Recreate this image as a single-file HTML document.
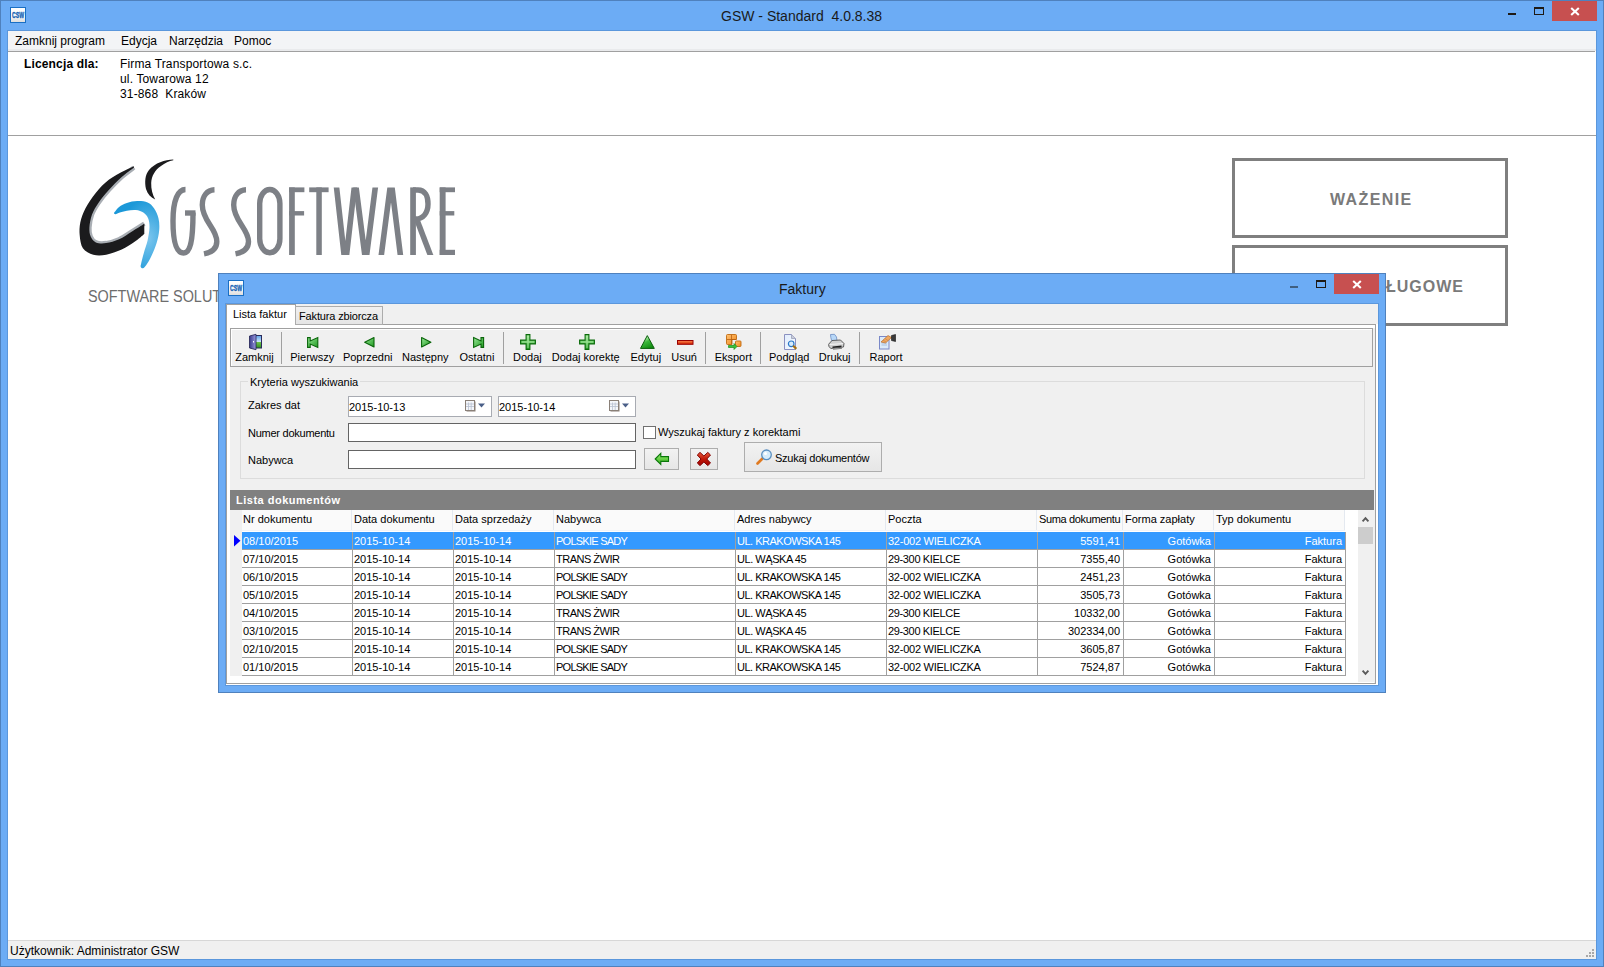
<!DOCTYPE html>
<html><head><meta charset="utf-8"><style>
*{box-sizing:border-box;margin:0;padding:0}
html,body{width:1604px;height:967px;overflow:hidden;background:#fff}
body{font-family:"Liberation Sans",sans-serif;font-size:11px;color:#000;position:relative}
.a{position:absolute}
.t{position:absolute;white-space:pre;line-height:1}
.c{position:absolute;white-space:pre;line-height:1;text-align:center}
.r{position:absolute;white-space:pre;line-height:1;text-align:right}
svg{position:absolute;overflow:visible}
</style></head><body>
<div class="a" style="left:0px;top:0px;width:1604px;height:967px;background:#6cacf5;border:1px solid #4f81bd"></div>
<svg style="left:10px;top:7px" width="16" height="16" viewBox="0 0 16 16"><defs><linearGradient id="ig10" x1="0" y1="0" x2="0" y2="1"><stop offset="0" stop-color="#fff"/><stop offset="0.55" stop-color="#f6f6f6"/><stop offset="1" stop-color="#dcdcdc"/></linearGradient></defs><rect x="0.5" y="0.5" width="15" height="15" fill="url(#ig10)" stroke="#1a6fc4"/><text x="2" y="11" font-family="Liberation Sans" font-size="8.2" font-weight="700" fill="#1461b4" stroke="#1461b4" stroke-width="0.35" textLength="12" lengthAdjust="spacingAndGlyphs" transform="translate(0,-1.6) scale(1,1.15)">CSW</text></svg>
<div class="t" style="left:721px;top:9px;font-size:14px;color:#1a1a1a">GSW - Standard  4.0.8.38</div>
<div class="a" style="left:1508px;top:13px;width:8px;height:2px;background:#1e1a16"></div>
<div class="a" style="left:1534px;top:7px;width:10px;height:8px;border:1px solid #1e1a16;border-top-width:2px"></div>
<div class="a" style="left:1552px;top:1px;width:45px;height:20px;background:#c75050"></div>
<svg style="left:1552px;top:1px" width="45" height="20"><path d="M19.2 7 L26.8 14 M26.8 7 L19.2 14" stroke="#fff" stroke-width="2.1"/></svg>
<div class="a" style="left:7px;top:30px;width:1590px;height:930px;background:#5b97dc"></div>
<div class="a" style="left:8px;top:31px;width:1588px;height:928px;background:#fff"></div>
<div class="a" style="left:8px;top:31px;width:1588px;height:18px;background:#f3f4f6"></div>
<div class="a" style="left:8px;top:49px;width:1588px;height:2px;background:#e9eaec"></div>
<div class="a" style="left:8px;top:51px;width:1587px;height:1px;background:#a0a0a0"></div>
<div class="t" style="left:15px;top:35px;font-size:12px">Zamknij program</div>
<div class="t" style="left:121px;top:35px;font-size:12px">Edycja</div>
<div class="t" style="left:169px;top:35px;font-size:12px">Narzędzia</div>
<div class="t" style="left:234px;top:35px;font-size:12px">Pomoc</div>
<div class="t" style="left:24px;top:58px;font-size:12px;font-weight:700;letter-spacing:0.15px">Licencja dla:</div>
<div class="t" style="left:120px;top:57px;font-size:12px;line-height:15px;letter-spacing:0.15px">Firma Transportowa s.c.
ul. Towarowa 12
31-868  Kraków</div>
<div class="a" style="left:8px;top:135px;width:1588px;height:1px;background:#a0a0a0"></div>
<div class="a" style="left:8px;top:940px;width:1588px;height:1px;background:#d7d7d7"></div>
<div class="a" style="left:8px;top:941px;width:1588px;height:18px;background:#f0f0f0"></div>
<div class="t" style="left:10px;top:945px;font-size:12px">Użytkownik: Administrator GSW</div>
<div class="a" style="left:1592px;top:949px;width:2px;height:2px;background:#a8a8a8"></div>
<div class="a" style="left:1589px;top:952px;width:2px;height:2px;background:#a8a8a8"></div>
<div class="a" style="left:1592px;top:952px;width:2px;height:2px;background:#a8a8a8"></div>
<div class="a" style="left:1586px;top:955px;width:2px;height:2px;background:#a8a8a8"></div>
<div class="a" style="left:1589px;top:955px;width:2px;height:2px;background:#a8a8a8"></div>
<div class="a" style="left:1592px;top:955px;width:2px;height:2px;background:#a8a8a8"></div>
<div class="a" style="left:1232px;top:158px;width:276px;height:80px;border:3px solid #7f7f7f"></div>
<div class="t" style="left:1330px;top:192px;font-size:16px;font-weight:700;color:#7a7a7a;letter-spacing:1.4px">WAŻENIE</div>
<div class="a" style="left:1232px;top:245px;width:276px;height:81px;border:3px solid #7f7f7f"></div>
<div class="r" style="right:140px;top:279px;font-size:16px;font-weight:700;color:#7a7a7a;letter-spacing:1.0px">USŁUGOWE</div>
<div class="t" style="left:88px;top:289px;font-size:16px;color:#6d6d6d;transform:scaleX(0.9);transform-origin:0 0">SOFTWARE SOLUTIONS</div>
<svg style="left:0;top:0" width="470" height="280" viewBox="0 0 470 280">
<defs>
<radialGradient id="bl" cx="0.75" cy="0.55" r="0.6"><stop offset="0" stop-color="#7cc6ee"/><stop offset="1" stop-color="#1b98d8"/></radialGradient>
<clipPath id="lc"><rect x="280" y="187.4" width="180" height="67.6"/></clipPath>
</defs>
<!-- gray shadow along big C inner edge -->
<path d="M134.0,167.5 C131.9,169.1 125.9,173.4 121.7,177.1 C117.5,180.9 112.7,185.8 108.8,190.1 C104.9,194.4 101.2,198.9 98.4,203.0 C95.6,207.1 93.5,210.5 92.0,214.6 C90.5,218.7 89.6,223.9 89.4,227.6 C89.2,231.2 89.6,234.1 90.7,236.6 C91.8,239.1 93.3,241.3 95.9,242.4 C98.4,243.5 102.3,243.6 106.2,243.1 C110.1,242.5 114.8,241.1 119.1,239.2 C123.4,237.3 127.8,234.0 132.0,231.4 C136.2,228.9 142.3,225.0 144.3,223.7" fill="none" stroke="#a9aeb4" stroke-width="4.5"/>
<!-- big black C -->
<path d="M134.0,166.2 C132.4,166.9 128.5,168.4 124.3,170.7 C120.1,172.9 113.5,176.1 108.8,179.7 C104.0,183.4 99.7,187.9 95.9,192.7 C92.0,197.4 88.1,203.2 85.5,208.2 C82.9,213.1 81.3,217.9 80.3,222.4 C79.4,226.9 79.3,231.0 79.7,235.3 C80.1,239.6 80.7,245.0 82.9,248.2 C85.2,251.5 89.4,253.6 93.3,254.7 C97.1,255.8 101.5,255.6 106.2,254.7 C110.9,253.8 117.0,251.7 121.7,249.5 C126.4,247.4 130.9,244.4 134.6,241.8 C138.4,239.2 142.7,235.3 144.3,234.0 L144.3,223.7 C142.3,225.0 136.2,228.9 132.0,231.4 C127.8,234.0 123.4,237.3 119.1,239.2 C114.8,241.1 110.1,242.5 106.2,243.1 C102.3,243.6 98.4,243.5 95.9,242.4 C93.3,241.3 91.8,239.1 90.7,236.6 C89.6,234.1 89.2,231.2 89.4,227.6 C89.6,223.9 90.5,218.7 92.0,214.6 C93.5,210.5 95.6,207.1 98.4,203.0 C101.2,198.9 104.9,194.4 108.8,190.1 C112.7,185.8 117.5,180.9 121.7,177.1 C125.9,173.4 131.9,169.1 134.0,167.5 Z" fill="#1b1b1d"/>
<!-- small top swoosh -->
<path d="M173.3,159.5 C165,159.5 155,163 149,170 C145,175 144.5,182 146,189 C147.5,194 151,197.5 155.2,199.5 C152.5,195 151,189 151.2,183 C151.5,176 155,170 161,166 C165,163 169,161 173.3,160.3 Z" fill="#1b1b1d"/>
<!-- blue swoosh -->
<path d="M114.6,212.0 C115.4,211.2 117.1,208.4 119.1,206.9 C121.2,205.4 123.9,204.0 126.9,203.0 C129.9,202.0 133.8,201.2 137.2,201.1 C140.7,201.0 144.8,201.2 147.6,202.4 C150.4,203.5 152.2,205.5 154.0,208.2 C155.9,210.9 157.7,214.8 158.5,218.5 C159.4,222.2 159.5,226.1 159.2,230.1 C158.9,234.2 157.9,238.8 156.6,243.1 C155.3,247.4 153.2,252.3 151.4,256.0 C149.7,259.7 147.7,263.0 146.3,265.0 C144.9,267.1 143.9,268.0 143.0,268.3 C142.1,268.6 141.2,267.7 140.8,267.0 C140.5,266.2 140.6,266.0 141.1,263.8 C141.6,261.5 142.6,257.3 143.7,253.4 C144.8,249.5 146.6,244.8 147.6,240.5 C148.5,236.2 149.4,231.2 149.5,227.6 C149.6,223.9 149.2,221.0 148.2,218.5 C147.2,216.0 145.7,214.1 143.7,212.7 C141.6,211.3 138.7,210.4 135.9,210.1 C133.1,209.8 129.7,210.3 126.9,210.8 C124.1,211.2 121.0,212.1 119.1,212.7 C117.2,213.3 116.4,214.1 115.5,214.2 C114.6,214.4 114.1,213.7 114.0,213.3 C113.8,213.0 114.5,212.3 114.6,212.0 Z" fill="url(#bl)"/>
<g fill="none" stroke="#7d8086" stroke-width="5.4">
<!-- G -->
<path d="M185.5 189.5 C178 189.5 173 200 173 221 C173 244 177 253 183.5 253 C190 253 193 242 193 212.5" />
<path d="M185 213 L195.5 213" />
<!-- S -->
<path d="M214.5 189.8 C207 190 202.3 196 202.3 205 C202.3 213 206 219 210 225 C214 231 216.8 236 216.8 241.5 C216.8 249 211 252.5 204 253.8" />
<path d="M246 189.8 C238.5 190 233.7 196 233.7 205 C233.7 213 237.5 219 241.5 225 C245.5 231 248.5 236 248.5 241.5 C248.5 249 242.5 252.5 235.5 253.8" />
<!-- O -->
<rect x="259.7" y="189.5" width="20.2" height="63.2" rx="10.1" ry="14"/>
</g>
<g fill="#7d8086">
<!-- F -->
<rect x="289.1" y="187.4" width="5.7" height="67.6"/><rect x="289.1" y="187.4" width="15.3" height="4.8"/><rect x="289.1" y="211.1" width="15" height="4.4"/>
<!-- T -->
<rect x="309.2" y="187.4" width="19.4" height="4.8"/><rect x="316.3" y="187.4" width="5.5" height="67.6"/>
<!-- R stem -->
<rect x="410.2" y="187.4" width="5.7" height="67.6"/>
<!-- E -->
<rect x="439.7" y="187.4" width="5.9" height="67.6"/><rect x="439.7" y="187.4" width="15.3" height="4.8"/><rect x="439.7" y="211.1" width="14.6" height="4.4"/><rect x="439.7" y="249.8" width="15.3" height="5.2"/>
</g>
<g fill="none" stroke="#7d8086" stroke-width="5.6" clip-path="url(#lc)">
<path d="M334.6 170 L346 272 M356.3 170 L344.6 272"/>
<path d="M353.8 170 L367 272 M377.5 170 L364.5 272"/>
<path d="M392.4 170 L379.1 272 M389.8 170 L402.5 272"/>
<path d="M417 220 L431.5 258"/>
</g>
<path d="M413 190 L418 190 C425 190 428 196 428 204 C428 213 423 219 416 219 L413 219" fill="none" stroke="#7d8086" stroke-width="5.4"/>
</svg>

<div class="a" style="left:218px;top:273px;width:1168px;height:420px;background:#6cacf5;border:1px solid #4f81bd"></div>
<svg style="left:228px;top:280px" width="16" height="16" viewBox="0 0 16 16"><defs><linearGradient id="ig228" x1="0" y1="0" x2="0" y2="1"><stop offset="0" stop-color="#fff"/><stop offset="0.55" stop-color="#f6f6f6"/><stop offset="1" stop-color="#dcdcdc"/></linearGradient></defs><rect x="0.5" y="0.5" width="15" height="15" fill="url(#ig228)" stroke="#1a6fc4"/><text x="2" y="11" font-family="Liberation Sans" font-size="8.2" font-weight="700" fill="#1461b4" stroke="#1461b4" stroke-width="0.35" textLength="12" lengthAdjust="spacingAndGlyphs" transform="translate(0,-1.6) scale(1,1.15)">CSW</text></svg>
<div class="t" style="left:779px;top:282px;font-size:14px;color:#1a1a1a">Faktury</div>
<div class="a" style="left:1290px;top:286px;width:8px;height:2px;background:#3f5f80"></div>
<div class="a" style="left:1316px;top:280px;width:10px;height:8px;border:1px solid #1e1a16;border-top-width:2px"></div>
<div class="a" style="left:1334px;top:274px;width:45px;height:20px;background:#c75050"></div>
<svg style="left:1334px;top:274px" width="45" height="20"><path d="M19.2 7 L26.8 14 M26.8 7 L19.2 14" stroke="#fff" stroke-width="2.1"/></svg>
<div class="a" style="left:225px;top:303px;width:1154px;height:383px;background:#5b97dc"></div>
<div class="a" style="left:226px;top:304px;width:1152px;height:381px;background:#f0f0f0"></div>
<div class="a" style="left:226px;top:324px;width:1152px;height:361px;background:#fff"></div>
<div class="a" style="left:226px;top:324px;width:1150px;height:360px;border:1px solid #a0a0a0;background:#fff"></div>
<div class="a" style="left:226px;top:304px;width:70px;height:21px;background:#fff;border:1px solid #a0a0a0;border-bottom:none"></div>
<div class="t" style="left:233px;top:309px">Lista faktur</div>
<div class="a" style="left:295px;top:306px;width:88px;height:19px;background:linear-gradient(#f0f0f0,#e5e5e5);border:1px solid #acacac"></div>
<div class="t" style="left:299px;top:311px;letter-spacing:-0.15px">Faktura zbiorcza</div>
<div class="a" style="left:230px;top:328px;width:1145px;height:355px;background:#f0f0f0"></div>
<div class="a" style="left:230px;top:328px;width:1143px;height:39px;border:1px solid #a0a0a0"></div>
<div class="a" style="left:231px;top:329px;width:1141px;height:37px;border:1px solid #fff;border-right:none;border-bottom:none"></div>
<div class="a" style="left:281px;top:332px;width:1px;height:32px;background:#a0a0a0"></div>
<div class="a" style="left:503px;top:332px;width:1px;height:32px;background:#a0a0a0"></div>
<div class="a" style="left:705px;top:332px;width:1px;height:32px;background:#a0a0a0"></div>
<div class="a" style="left:760px;top:332px;width:1px;height:32px;background:#a0a0a0"></div>
<div class="a" style="left:859px;top:332px;width:1px;height:32px;background:#a0a0a0"></div>
<div class="c" style="left:204.5px;top:352px;width:100px">Zamknij</div>
<svg style="left:249px;top:334px" width="13" height="16" viewBox="0 0 13 16"><defs><linearGradient id="dg" x1="0" y1="0" x2="1" y2="0"><stop offset="0" stop-color="#3a3a8a"/><stop offset="1" stop-color="#9b9be0"/></linearGradient><linearGradient id="sky" x1="0" y1="0" x2="0" y2="1"><stop offset="0" stop-color="#5aa0e8"/><stop offset="0.5" stop-color="#cfe6fb"/><stop offset="0.55" stop-color="#6cc04a"/><stop offset="1" stop-color="#2f8f1f"/></linearGradient></defs><rect x="5" y="1.5" width="7.5" height="12.5" fill="url(#sky)" stroke="#2a2a5a" stroke-width="1"/><path d="M0.5 2 L7 0.3 L7 15.7 L0.5 14 Z" fill="url(#dg)" stroke="#202050" stroke-width="0.8"/><rect x="4" y="7" width="1" height="1.5" fill="#fff"/></svg>
<div class="c" style="left:262.3px;top:352px;width:100px">Pierwszy</div>
<svg style="left:307px;top:337px" width="12" height="11" viewBox="0 0 12 11"><defs><linearGradient id="gg307" x1="0" y1="0" x2="1" y2="1"><stop offset="0" stop-color="#98e898"/><stop offset="1" stop-color="#1f9a1f"/></linearGradient></defs><path d="M0.6 0.6 H3.2 V4 L10.8 0.6 V10.4 L3.2 7 V10.4 H0.6 Z" fill="url(#gg307)" stroke="#0a650a" stroke-width="1.1" stroke-linejoin="miter"/></svg>
<div class="c" style="left:317.7px;top:352px;width:100px">Poprzedni</div>
<svg style="left:364px;top:337px" width="11" height="11" viewBox="0 0 11 11"><defs><linearGradient id="gg364" x1="0" y1="0" x2="1" y2="1"><stop offset="0" stop-color="#98e898"/><stop offset="1" stop-color="#1f9a1f"/></linearGradient></defs><path d="M10 0.6 L0.7 5.2 L10 9.9 Z" fill="url(#gg364)" stroke="#0a650a" stroke-width="1.1" stroke-linejoin="round"/></svg>
<div class="c" style="left:375.3px;top:352px;width:100px">Następny</div>
<svg style="left:421px;top:337px" width="11" height="11" viewBox="0 0 11 11"><defs><linearGradient id="gg421" x1="0" y1="0" x2="1" y2="1"><stop offset="0" stop-color="#98e898"/><stop offset="1" stop-color="#1f9a1f"/></linearGradient></defs><path d="M0.6 0.6 L9.9 5.2 L0.6 9.9 Z" fill="url(#gg421)" stroke="#0a650a" stroke-width="1.1" stroke-linejoin="round"/></svg>
<div class="c" style="left:427.0px;top:352px;width:100px">Ostatni</div>
<svg style="left:473px;top:337px" width="12" height="11" viewBox="0 0 12 11"><defs><linearGradient id="gg473" x1="0" y1="0" x2="1" y2="1"><stop offset="0" stop-color="#98e898"/><stop offset="1" stop-color="#1f9a1f"/></linearGradient></defs><path d="M0.6 0.6 L8 4 V0.6 H10.6 V10.4 H8 V7 L0.6 10.4 Z" fill="url(#gg473)" stroke="#0a650a" stroke-width="1.1" stroke-linejoin="miter"/></svg>
<div class="c" style="left:477.4px;top:352px;width:100px">Dodaj</div>
<svg style="left:520px;top:334px" width="16" height="16" viewBox="0 0 16 16"><defs><linearGradient id="pg520" x1="0" y1="0" x2="0" y2="1"><stop offset="0" stop-color="#a8eea0"/><stop offset="1" stop-color="#2aa52a"/></linearGradient></defs><path d="M6.1 0.6 H9.9 V6.1 H15.4 V9.9 H9.9 V15.4 H6.1 V9.9 H0.6 V6.1 H6.1 Z" fill="url(#pg520)" stroke="#0a6a0a" stroke-width="1.1"/><path d="M8 2 V14 M2 8 H14" stroke="#c8f5c0" stroke-width="0.8" opacity="0.7"/></svg>
<div class="c" style="left:535.7px;top:352px;width:100px">Dodaj korektę</div>
<svg style="left:579px;top:334px" width="16" height="16" viewBox="0 0 16 16"><defs><linearGradient id="pg579" x1="0" y1="0" x2="0" y2="1"><stop offset="0" stop-color="#a8eea0"/><stop offset="1" stop-color="#2aa52a"/></linearGradient></defs><path d="M6.1 0.6 H9.9 V6.1 H15.4 V9.9 H9.9 V15.4 H6.1 V9.9 H0.6 V6.1 H6.1 Z" fill="url(#pg579)" stroke="#0a6a0a" stroke-width="1.1"/><path d="M8 2 V14 M2 8 H14" stroke="#c8f5c0" stroke-width="0.8" opacity="0.7"/></svg>
<div class="c" style="left:595.8px;top:352px;width:100px">Edytuj</div>
<svg style="left:640px;top:335px" width="15" height="14" viewBox="0 0 15 14"><defs><linearGradient id="tg" x1="0.3" y1="0.2" x2="0.7" y2="1"><stop offset="0" stop-color="#b8f0b0"/><stop offset="0.35" stop-color="#3cb83c"/><stop offset="1" stop-color="#0e8a0e"/></linearGradient></defs><path d="M7.3 0.6 L14.3 13.4 L0.5 13.4 Z" fill="url(#tg)" stroke="#0a5e0a" stroke-width="1" stroke-linejoin="round"/></svg>
<div class="c" style="left:634.1px;top:352px;width:100px">Usuń</div>
<svg style="left:677px;top:340px" width="17" height="5" viewBox="0 0 17 5"><defs><linearGradient id="mg" x1="0" y1="0" x2="0" y2="1"><stop offset="0" stop-color="#ff8a50"/><stop offset="1" stop-color="#d02000"/></linearGradient></defs><rect x="0.5" y="0.5" width="15.5" height="3.8" fill="url(#mg)" stroke="#9a0000" stroke-width="1"/></svg>
<div class="c" style="left:683.3px;top:352px;width:100px">Eksport</div>
<svg style="left:726px;top:334px" width="17" height="17" viewBox="0 0 17 17"><defs><linearGradient id="og" x1="0" y1="0" x2="1" y2="1"><stop offset="0" stop-color="#ffc070"/><stop offset="1" stop-color="#f08a20"/></linearGradient></defs><path d="M1.5 0.5 H9.5 Q10.5 0.5 10.5 1.5 V5.5 H6 V10.5 H1.5 Q0.5 10.5 0.5 9.5 V1.5 Q0.5 0.5 1.5 0.5 Z" fill="url(#og)" stroke="#c06a10" stroke-width="0.9"/><path d="M5.5 1 V10 M1 5.5 H10" stroke="#b86010" stroke-width="0.8"/><rect x="9.5" y="7" width="5.5" height="5.5" rx="0.8" fill="url(#og)" stroke="#c06a10" stroke-width="0.9"/><path d="M2.5 11.5 H8 V9.5 L11 12.5 L8 15.5 V13.5 H2.5 Z" fill="#3cc03c" stroke="#159015" stroke-width="0.7"/></svg>
<div class="c" style="left:739.2px;top:352px;width:100px">Podgląd</div>
<svg style="left:784px;top:334px" width="14" height="16" viewBox="0 0 14 16"><defs><linearGradient id="pvg" x1="0" y1="0" x2="1" y2="1"><stop offset="0" stop-color="#e0ecfc"/><stop offset="1" stop-color="#f8fbff"/></linearGradient></defs><path d="M0.5 0.5 H7.5 L11.5 4.5 V15.5 H0.5 Z" fill="url(#pvg)" stroke="#8a90c0"/><path d="M7.5 0.5 V4.5 H11.5" fill="#c8ccd8" stroke="#9aa0b8" stroke-width="0.8"/><circle cx="7.2" cy="9.8" r="2.8" fill="#d8ecfb" stroke="#2a78c8" stroke-width="1.2"/><path d="M9.2 11.8 L12.3 14.9" stroke="#a87010" stroke-width="2.2"/></svg>
<div class="c" style="left:784.7px;top:352px;width:100px">Drukuj</div>
<svg style="left:828px;top:334px" width="17" height="16" viewBox="0 0 17 16"><path d="M2.5 0.5 L6.5 0.3 L8.5 3 L9 7 L4 8 L2.8 3.5 Z" fill="#b8d8f8" stroke="#6a8ac0" stroke-width="0.8"/><path d="M0.8 10 L4 6.5 L12.5 6 L16 9.5 L15.5 13 L3 14.5 L0.8 12.5 Z" fill="#d0d0d0" stroke="#505050" stroke-width="0.9"/><path d="M1.5 10.5 L15 9.6" stroke="#f4f4f4" stroke-width="1"/><path d="M4.5 12.5 L13.5 11.5 L13.5 13 L4.5 14 Z" fill="#202020"/><path d="M5 15.3 L14 14.3" stroke="#666" stroke-width="0.8"/></svg>
<div class="c" style="left:836.0px;top:352px;width:100px">Raport</div>
<svg style="left:879px;top:334px" width="17" height="16" viewBox="0 0 17 16"><rect x="0.5" y="2.5" width="9.5" height="12.5" fill="#dceaf8" stroke="#7a88c8"/><path d="M2.5 9 H8 M2.5 11 H8" stroke="#a8c0e0" stroke-width="1"/><path d="M2 8 L9 1.5 L12.5 3.5 L6.5 9 Z" fill="#f0a860" stroke="#b87030" stroke-width="0.7"/><path d="M4 6 L7 8 M6 4.5 L9 6.5" stroke="#c88040" stroke-width="0.6"/><path d="M12.5 1.5 L16.5 0.5 V7.5 L12.5 6.5 Z" fill="#3a3a3a" stroke="#111" stroke-width="0.6"/></svg>
<div class="a" style="left:240px;top:381px;width:1125px;height:98px;border:1px solid #dcdcdc"></div>
<div class="a" style="left:248px;top:377px;width:112px;height:8px;background:#f0f0f0"></div>
<div class="t" style="left:250px;top:377px">Kryteria wyszukiwania</div>
<div class="t" style="left:248px;top:400px">Zakres dat</div>
<div class="t" style="left:248px;top:428px;letter-spacing:-0.25px">Numer dokumentu</div>
<div class="t" style="left:248px;top:455px">Nabywca</div>
<div class="a" style="left:348px;top:396px;width:144px;height:21px;border:1px solid #a8abb2;background:#fff"></div>
<div class="t" style="left:349px;top:402px">2015-10-13</div>
<svg style="left:465px;top:400px" width="22" height="12" viewBox="0 0 22 12"><rect x="1.5" y="1.5" width="9" height="10" fill="#8a7f78"/><rect x="0.5" y="0.5" width="9" height="10" fill="#f4f6fa" stroke="#8a8078"/><g stroke="#b8c0d0" stroke-width="0.8"><line x1="1" y1="4" x2="9" y2="4"/><line x1="1" y1="6.5" x2="9" y2="6.5"/><line x1="3.5" y1="2.5" x2="3.5" y2="10"/><line x1="6.2" y1="2.5" x2="6.2" y2="10"/></g><path d="M13 3.5 L20 3.5 L16.5 7.5 Z" fill="#4a5f88"/></svg>
<div class="a" style="left:498px;top:396px;width:138px;height:21px;border:1px solid #a8abb2;background:#fff"></div>
<div class="t" style="left:499px;top:402px">2015-10-14</div>
<svg style="left:609px;top:400px" width="22" height="12" viewBox="0 0 22 12"><rect x="1.5" y="1.5" width="9" height="10" fill="#8a7f78"/><rect x="0.5" y="0.5" width="9" height="10" fill="#f4f6fa" stroke="#8a8078"/><g stroke="#b8c0d0" stroke-width="0.8"><line x1="1" y1="4" x2="9" y2="4"/><line x1="1" y1="6.5" x2="9" y2="6.5"/><line x1="3.5" y1="2.5" x2="3.5" y2="10"/><line x1="6.2" y1="2.5" x2="6.2" y2="10"/></g><path d="M13 3.5 L20 3.5 L16.5 7.5 Z" fill="#4a5f88"/></svg>
<div class="a" style="left:348px;top:423px;width:288px;height:19px;border:1px solid #646464;background:#fff"></div>
<div class="a" style="left:348px;top:450px;width:288px;height:19px;border:1px solid #646464;background:#fff"></div>
<div class="a" style="left:643px;top:426px;width:13px;height:13px;border:1px solid #707070;background:#fff"></div>
<div class="t" style="left:658px;top:427px">Wyszukaj faktury z korektami</div>
<div class="a" style="left:644px;top:448px;width:35px;height:22px;border:1px solid #adadad;background:linear-gradient(#f2f2f2,#e6e6e6)"></div>
<svg style="left:650px;top:449px" width="24" height="20" viewBox="650 449 24 20"><defs><linearGradient id="ag" x1="0" y1="0" x2="0" y2="1"><stop offset="0" stop-color="#9af070"/><stop offset="1" stop-color="#38b020"/></linearGradient></defs><path d="M655.2 459 L660.8 453.4 V456.6 H668.5 V461.4 H660.8 V464.4 Z" fill="url(#ag)" stroke="#0a780a" stroke-width="1.1" stroke-linejoin="miter"/></svg>
<div class="a" style="left:690px;top:448px;width:28px;height:22px;border:1px solid #adadad;background:linear-gradient(#f2f2f2,#e6e6e6)"></div>
<svg style="left:694px;top:450px" width="20" height="18" viewBox="694 450 20 18"><defs><linearGradient id="xg" x1="0" y1="0" x2="0" y2="1"><stop offset="0" stop-color="#e85a3a"/><stop offset="0.5" stop-color="#c01808"/><stop offset="1" stop-color="#a00000"/></linearGradient></defs><path d="M697.3 455 L700 452.4 L703.9 456 L707.8 452.4 L710.5 455 L706.8 459 L710.5 463 L707.8 465.6 L703.9 462 L700 465.6 L697.3 463 L701 459 Z" fill="url(#xg)" stroke="#800000" stroke-width="1" stroke-linejoin="round"/></svg>
<div class="a" style="left:744px;top:442px;width:138px;height:30px;border:1px solid #adadad;background:linear-gradient(#f2f2f2,#e6e6e6)"></div>
<svg style="left:756px;top:449px" width="17" height="16" viewBox="0 0 17 16"><path d="M1.5 14.5 L6.5 9.5" stroke="#e07a20" stroke-width="2.6" stroke-linecap="round"/><circle cx="10.5" cy="5.8" r="4.8" fill="#d6ecfb" stroke="#5a8fc0" stroke-width="1.3"/><circle cx="9.5" cy="4.5" r="1.5" fill="#fff"/></svg>
<div class="t" style="left:775px;top:453px;letter-spacing:-0.25px">Szukaj dokumentów</div>
<div class="a" style="left:230px;top:490px;width:1144px;height:20px;background:#808080"></div>
<div class="t" style="left:236px;top:495px;font-weight:700;color:#fff;letter-spacing:0.5px">Lista dokumentów</div>
<div class="a" style="left:230px;top:510px;width:1144px;height:173px;background:#fff"></div>
<div class="a" style="left:230px;top:510px;width:12px;height:166px;background:#f0f0f0"></div>
<div class="a" style="left:242px;top:510px;width:1103px;height:20px;background:#fafafa"></div>
<div class="a" style="left:242px;top:530px;width:1103px;height:1px;background:#f0f3f8"></div>
<div class="t" style="left:243px;top:514px">Nr dokumentu</div>
<div class="a" style="left:351px;top:510px;width:1px;height:20px;background:#e4e9f0"></div>
<div class="t" style="left:354px;top:514px">Data dokumentu</div>
<div class="a" style="left:452px;top:510px;width:1px;height:20px;background:#e4e9f0"></div>
<div class="t" style="left:455px;top:514px">Data sprzedaży</div>
<div class="a" style="left:553px;top:510px;width:1px;height:20px;background:#e4e9f0"></div>
<div class="t" style="left:556px;top:514px">Nabywca</div>
<div class="a" style="left:734px;top:510px;width:1px;height:20px;background:#e4e9f0"></div>
<div class="t" style="left:737px;top:514px">Adres nabywcy</div>
<div class="a" style="left:885px;top:510px;width:1px;height:20px;background:#e4e9f0"></div>
<div class="t" style="left:888px;top:514px">Poczta</div>
<div class="a" style="left:1036px;top:510px;width:1px;height:20px;background:#e4e9f0"></div>
<div class="t" style="left:1039px;top:514px;letter-spacing:-0.35px">Suma dokumentu</div>
<div class="a" style="left:1122px;top:510px;width:1px;height:20px;background:#e4e9f0"></div>
<div class="t" style="left:1125px;top:514px">Forma zapłaty</div>
<div class="a" style="left:1213px;top:510px;width:1px;height:20px;background:#e4e9f0"></div>
<div class="t" style="left:1216px;top:514px">Typ dokumentu</div>
<div class="a" style="left:1344px;top:510px;width:1px;height:20px;background:#e4e9f0"></div>
<div class="a" style="left:352px;top:532px;width:1px;height:144px;background:#a0a0a0"></div>
<div class="a" style="left:453px;top:532px;width:1px;height:144px;background:#a0a0a0"></div>
<div class="a" style="left:554px;top:532px;width:1px;height:144px;background:#a0a0a0"></div>
<div class="a" style="left:735px;top:532px;width:1px;height:144px;background:#a0a0a0"></div>
<div class="a" style="left:886px;top:532px;width:1px;height:144px;background:#a0a0a0"></div>
<div class="a" style="left:1037px;top:532px;width:1px;height:144px;background:#a0a0a0"></div>
<div class="a" style="left:1123px;top:532px;width:1px;height:144px;background:#a0a0a0"></div>
<div class="a" style="left:1214px;top:532px;width:1px;height:144px;background:#a0a0a0"></div>
<div class="a" style="left:1345px;top:532px;width:1px;height:144px;background:#a0a0a0"></div>
<div class="a" style="left:242px;top:532px;width:110px;height:17px;background:#3399ff"></div>
<div class="a" style="left:353px;top:532px;width:100px;height:17px;background:#3399ff"></div>
<div class="a" style="left:454px;top:532px;width:100px;height:17px;background:#3399ff"></div>
<div class="a" style="left:555px;top:532px;width:180px;height:17px;background:#3399ff"></div>
<div class="a" style="left:736px;top:532px;width:150px;height:17px;background:#3399ff"></div>
<div class="a" style="left:887px;top:532px;width:150px;height:17px;background:#3399ff"></div>
<div class="a" style="left:1038px;top:532px;width:85px;height:17px;background:#3399ff"></div>
<div class="a" style="left:1124px;top:532px;width:90px;height:17px;background:#3399ff"></div>
<div class="a" style="left:1215px;top:532px;width:130px;height:17px;background:#3399ff"></div>
<svg style="left:234px;top:535px" width="7" height="12"><path d="M0 0 L6.5 5.75 L0 11.5 Z" fill="#0000ff"/></svg>
<div class="a" style="left:242px;top:549px;width:1104px;height:1px;background:#a0a0a0"></div>
<div class="t" style="left:243px;top:536px;color:#fff">08/10/2015</div>
<div class="t" style="left:354px;top:536px;color:#fff">2015-10-14</div>
<div class="t" style="left:455px;top:536px;color:#fff">2015-10-14</div>
<div class="t" style="left:556px;top:536px;color:#fff;letter-spacing:-0.75px">POLSKIE SADY</div>
<div class="t" style="left:737px;top:536px;color:#fff;letter-spacing:-0.5px">UL. KRAKOWSKA 145</div>
<div class="t" style="left:888px;top:536px;color:#fff;letter-spacing:-0.25px">32-002 WIELICZKA</div>
<div class="r" style="left:1038px;top:536px;width:82px;color:#fff">5591,41</div>
<div class="r" style="left:1124px;top:536px;width:87px;color:#fff">Gotówka</div>
<div class="r" style="left:1215px;top:536px;width:127px;color:#fff">Faktura</div>
<div class="a" style="left:242px;top:567px;width:1104px;height:1px;background:#a0a0a0"></div>
<div class="t" style="left:243px;top:554px;color:#000">07/10/2015</div>
<div class="t" style="left:354px;top:554px;color:#000">2015-10-14</div>
<div class="t" style="left:455px;top:554px;color:#000">2015-10-14</div>
<div class="t" style="left:556px;top:554px;color:#000;letter-spacing:-0.5px">TRANS ŻWIR</div>
<div class="t" style="left:737px;top:554px;color:#000;letter-spacing:-0.45px">UL. WĄSKA 45</div>
<div class="t" style="left:888px;top:554px;color:#000;letter-spacing:-0.35px">29-300 KIELCE</div>
<div class="r" style="left:1038px;top:554px;width:82px;color:#000">7355,40</div>
<div class="r" style="left:1124px;top:554px;width:87px;color:#000">Gotówka</div>
<div class="r" style="left:1215px;top:554px;width:127px;color:#000">Faktura</div>
<div class="a" style="left:242px;top:585px;width:1104px;height:1px;background:#a0a0a0"></div>
<div class="t" style="left:243px;top:572px;color:#000">06/10/2015</div>
<div class="t" style="left:354px;top:572px;color:#000">2015-10-14</div>
<div class="t" style="left:455px;top:572px;color:#000">2015-10-14</div>
<div class="t" style="left:556px;top:572px;color:#000;letter-spacing:-0.75px">POLSKIE SADY</div>
<div class="t" style="left:737px;top:572px;color:#000;letter-spacing:-0.5px">UL. KRAKOWSKA 145</div>
<div class="t" style="left:888px;top:572px;color:#000;letter-spacing:-0.25px">32-002 WIELICZKA</div>
<div class="r" style="left:1038px;top:572px;width:82px;color:#000">2451,23</div>
<div class="r" style="left:1124px;top:572px;width:87px;color:#000">Gotówka</div>
<div class="r" style="left:1215px;top:572px;width:127px;color:#000">Faktura</div>
<div class="a" style="left:242px;top:603px;width:1104px;height:1px;background:#a0a0a0"></div>
<div class="t" style="left:243px;top:590px;color:#000">05/10/2015</div>
<div class="t" style="left:354px;top:590px;color:#000">2015-10-14</div>
<div class="t" style="left:455px;top:590px;color:#000">2015-10-14</div>
<div class="t" style="left:556px;top:590px;color:#000;letter-spacing:-0.75px">POLSKIE SADY</div>
<div class="t" style="left:737px;top:590px;color:#000;letter-spacing:-0.5px">UL. KRAKOWSKA 145</div>
<div class="t" style="left:888px;top:590px;color:#000;letter-spacing:-0.25px">32-002 WIELICZKA</div>
<div class="r" style="left:1038px;top:590px;width:82px;color:#000">3505,73</div>
<div class="r" style="left:1124px;top:590px;width:87px;color:#000">Gotówka</div>
<div class="r" style="left:1215px;top:590px;width:127px;color:#000">Faktura</div>
<div class="a" style="left:242px;top:621px;width:1104px;height:1px;background:#a0a0a0"></div>
<div class="t" style="left:243px;top:608px;color:#000">04/10/2015</div>
<div class="t" style="left:354px;top:608px;color:#000">2015-10-14</div>
<div class="t" style="left:455px;top:608px;color:#000">2015-10-14</div>
<div class="t" style="left:556px;top:608px;color:#000;letter-spacing:-0.5px">TRANS ŻWIR</div>
<div class="t" style="left:737px;top:608px;color:#000;letter-spacing:-0.45px">UL. WĄSKA 45</div>
<div class="t" style="left:888px;top:608px;color:#000;letter-spacing:-0.35px">29-300 KIELCE</div>
<div class="r" style="left:1038px;top:608px;width:82px;color:#000">10332,00</div>
<div class="r" style="left:1124px;top:608px;width:87px;color:#000">Gotówka</div>
<div class="r" style="left:1215px;top:608px;width:127px;color:#000">Faktura</div>
<div class="a" style="left:242px;top:639px;width:1104px;height:1px;background:#a0a0a0"></div>
<div class="t" style="left:243px;top:626px;color:#000">03/10/2015</div>
<div class="t" style="left:354px;top:626px;color:#000">2015-10-14</div>
<div class="t" style="left:455px;top:626px;color:#000">2015-10-14</div>
<div class="t" style="left:556px;top:626px;color:#000;letter-spacing:-0.5px">TRANS ŻWIR</div>
<div class="t" style="left:737px;top:626px;color:#000;letter-spacing:-0.45px">UL. WĄSKA 45</div>
<div class="t" style="left:888px;top:626px;color:#000;letter-spacing:-0.35px">29-300 KIELCE</div>
<div class="r" style="left:1038px;top:626px;width:82px;color:#000">302334,00</div>
<div class="r" style="left:1124px;top:626px;width:87px;color:#000">Gotówka</div>
<div class="r" style="left:1215px;top:626px;width:127px;color:#000">Faktura</div>
<div class="a" style="left:242px;top:657px;width:1104px;height:1px;background:#a0a0a0"></div>
<div class="t" style="left:243px;top:644px;color:#000">02/10/2015</div>
<div class="t" style="left:354px;top:644px;color:#000">2015-10-14</div>
<div class="t" style="left:455px;top:644px;color:#000">2015-10-14</div>
<div class="t" style="left:556px;top:644px;color:#000;letter-spacing:-0.75px">POLSKIE SADY</div>
<div class="t" style="left:737px;top:644px;color:#000;letter-spacing:-0.5px">UL. KRAKOWSKA 145</div>
<div class="t" style="left:888px;top:644px;color:#000;letter-spacing:-0.25px">32-002 WIELICZKA</div>
<div class="r" style="left:1038px;top:644px;width:82px;color:#000">3605,87</div>
<div class="r" style="left:1124px;top:644px;width:87px;color:#000">Gotówka</div>
<div class="r" style="left:1215px;top:644px;width:127px;color:#000">Faktura</div>
<div class="a" style="left:242px;top:675px;width:1104px;height:1px;background:#a0a0a0"></div>
<div class="t" style="left:243px;top:662px;color:#000">01/10/2015</div>
<div class="t" style="left:354px;top:662px;color:#000">2015-10-14</div>
<div class="t" style="left:455px;top:662px;color:#000">2015-10-14</div>
<div class="t" style="left:556px;top:662px;color:#000;letter-spacing:-0.75px">POLSKIE SADY</div>
<div class="t" style="left:737px;top:662px;color:#000;letter-spacing:-0.5px">UL. KRAKOWSKA 145</div>
<div class="t" style="left:888px;top:662px;color:#000;letter-spacing:-0.25px">32-002 WIELICZKA</div>
<div class="r" style="left:1038px;top:662px;width:82px;color:#000">7524,87</div>
<div class="r" style="left:1124px;top:662px;width:87px;color:#000">Gotówka</div>
<div class="r" style="left:1215px;top:662px;width:127px;color:#000">Faktura</div>
<div class="a" style="left:1358px;top:510px;width:16px;height:172px;background:#f0f0f0"></div>
<div class="a" style="left:1358px;top:527px;width:15px;height:17px;background:#cdcdcd"></div>
<svg style="left:1361px;top:515px" width="9" height="8"><path d="M1.6 6.4 L4.5 3.2 L7.4 6.4" stroke="#5a5a5a" stroke-width="1.9" fill="none"/></svg>
<svg style="left:1361px;top:669px" width="9" height="8"><path d="M1.6 1.6 L4.5 4.8 L7.4 1.6" stroke="#5a5a5a" stroke-width="1.9" fill="none"/></svg>
</body></html>
